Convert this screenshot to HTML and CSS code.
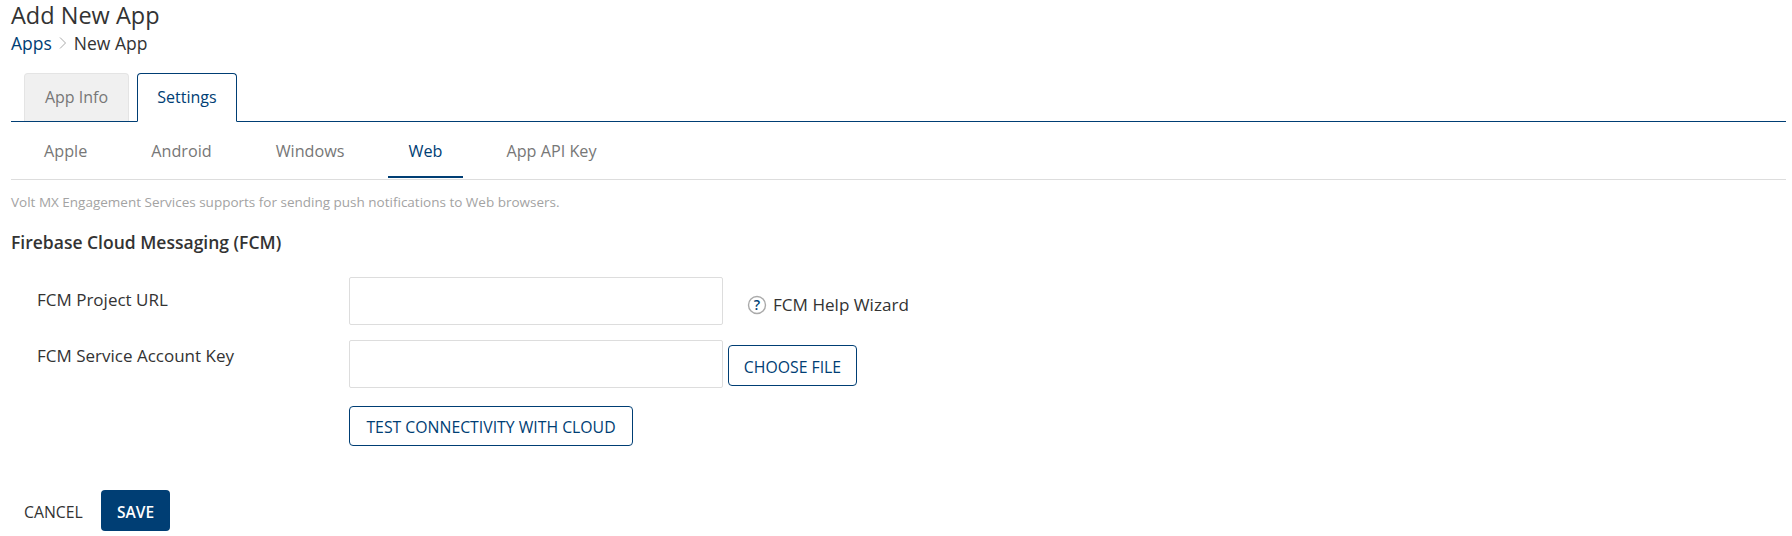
FILE: index.html
```html
<!DOCTYPE html>
<html lang="en">
<head>
    <meta charset="UTF-8">
    <title>Add New App</title>
    <link rel="stylesheet" href="styles.css">
</head>
<body>
    <div class="page-head">
        <h1>Add New App</h1>
        <div class="breadcrumb">
            <a href="#">Apps</a>
            <svg class="crumb-sep" width="10" height="14" viewBox="0 0 10 14"><path d="M2 1.5l5.5 5.5-5.5 5.5" fill="none" stroke="#aaa" stroke-width="1"/></svg>
            <span>New App</span>
        </div>
    </div>

    <div class="tabs">
        <div class="tab">App Info</div>
        <div class="tab active">Settings</div>
    </div>

    <div class="subtabs">
        <div class="subtab">Apple</div>
        <div class="subtab">Android</div>
        <div class="subtab">Windows</div>
        <div class="subtab active">Web</div>
        <div class="subtab">App API Key</div>
    </div>

    <p class="desc">Volt MX Engagement Services supports for sending push notifications to Web browsers.</p>
    <h2>Firebase Cloud Messaging (FCM)</h2>

    <div class="form-row first">
        <label>FCM Project URL</label>
        <input type="text" class="field">
        <a class="help" href="#">
            <svg width="20" height="20" viewBox="0 0 20 20"><circle cx="10" cy="10" r="8.5" fill="none" stroke="#aaa" stroke-width="1.4"/><text x="10" y="15" text-anchor="middle" class="help-mark">?</text></svg>
            FCM Help Wizard
        </a>
    </div>
    <div class="form-row second">
        <label>FCM Service Account Key</label>
        <input type="text" class="field">
        <button class="btn choose">CHOOSE FILE</button>
    </div>
    <div class="test-row">
        <button class="btn test">TEST CONNECTIVITY WITH CLOUD</button>
    </div>

    <div class="actions">
        <a class="cancel" href="#">CANCEL</a>
        <button class="save">SAVE</button>
    </div>
</body>
</html>
```

FILE: styles.css
```css
* {
    box-sizing: border-box;
}
body {
    margin: 0;
    padding: 0 6px 0 11px;
    font-family: "Open Sans", sans-serif;
    color: #333;
    background: #fff;
    overflow: hidden;
    height: 536px;
}
.page-head {
    height: 73px;
    padding-top: 1px;
}
h1 {
    margin: 0;
    font-size: 23.5px;
    font-weight: 400;
    line-height: 28px;
    color: #333;
}
.breadcrumb {
    display: flex;
    align-items: center;
    gap: 6px;
    font-size: 17.5px;
    line-height: 24px;
    margin-top: 2px;
}
.breadcrumb a {
    color: #003e74;
    text-decoration: none;
}
.tabs {
    display: flex;
    gap: 8px;
    height: 49px;
    padding-left: 13px;
    border-bottom: 1px solid #003e74;
}
.tab {
    width: 105px;
    height: 48px;
    font-size: 16px;
    line-height: 46px;
    text-align: center;
    color: #777;
    background: #f0f0f0;
    border: 1px solid #e4e4e4;
    border-bottom: none;
    border-radius: 4px 4px 0 0;
}
.tab.active {
    width: 100px;
    height: 49px;
    color: #003e74;
    background: #fff;
    border: 1px solid #003e74;
    border-bottom: 1px solid #fff;
}
.subtabs {
    display: flex;
    height: 58px;
    border-bottom: 1px solid #ddd;
    padding-left: 12px;
    gap: 22px;
}
.subtab {
    padding: 0 21px;
    height: 56px;
    font-size: 16.2px;
    line-height: 58px;
    color: #777;
}
.subtab.active {
    color: #003e74;
    border-bottom: 2px solid #003e74;
}
.desc {
    margin: 13px 0 0;
    font-size: 13.5px;
    line-height: 18px;
    color: #a3a3a3;
}
h2 {
    margin: 19px 0 0;
    font-size: 17.5px;
    font-weight: 600;
    line-height: 24px;
    color: #333;
}
.form-row {
    display: flex;
    align-items: flex-start;
}
.form-row.first {
    margin-top: 23px;
}
.form-row.second {
    margin-top: 15px;
}
label {
    width: 338px;
    padding-left: 26px;
    font-size: 17px;
    line-height: 24px;
    color: #333;
}
.first label {
    padding-top: 11px;
}
.second label {
    padding-top: 4px;
}
.field {
    width: 374px;
    height: 48px;
    border: 1px solid #ddd;
    border-radius: 2px;
    background: #fff;
}
.help {
    display: flex;
    align-items: center;
    gap: 6px;
    margin: 16px 0 0 24px;
    font-size: 17.1px;
    line-height: 24px;
    color: #333;
    text-decoration: none;
}
.help-mark {
    font-size: 14px;
    font-weight: 600;
    fill: #003e74;
    font-family: "Open Sans", sans-serif;
}
.btn {
    height: 41px;
    background: #fff;
    border: 1px solid #003e74;
    border-radius: 4px;
    color: #003e74;
    font-family: "Open Sans", sans-serif;
    font-size: 15.8px;
    font-weight: 400;
    padding: 2px 0 0;
}
.choose {
    width: 129px;
    margin: 5px 0 0 5px;
}
.test-row {
    margin: 18px 0 0 338px;
}
.test {
    width: 284px;
    height: 40px;
}
.actions {
    display: flex;
    align-items: center;
    margin-top: 44px;
}
.cancel {
    margin-left: 13px;
    width: 77px;
    padding-top: 2px;
    font-size: 15.8px;
    color: #333;
    text-decoration: none;
}
.save {
    width: 69px;
    height: 41px;
    background: #003e74;
    border: none;
    border-radius: 4px;
    color: #fff;
    font-family: "Open Sans", sans-serif;
    font-size: 15.5px;
    font-weight: 600;
    padding: 2px 0 0;
}
```
